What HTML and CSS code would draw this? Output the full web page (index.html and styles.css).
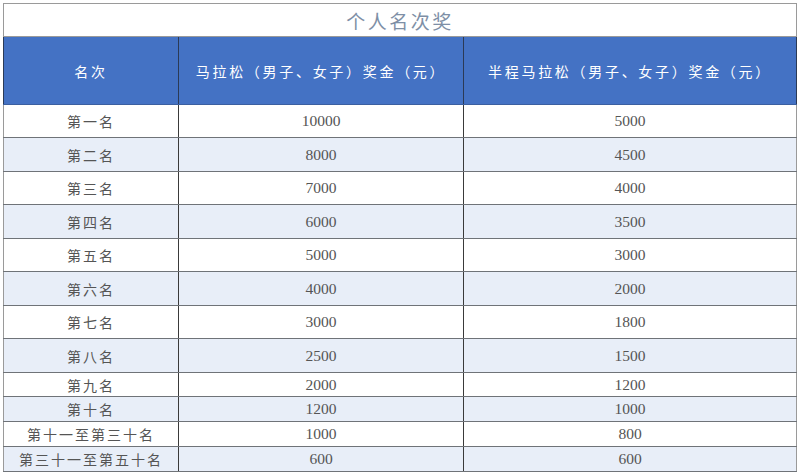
FILE: index.html
```html
<!DOCTYPE html>
<html lang="zh-CN">
<head>
<meta charset="utf-8">
<link rel="stylesheet" href="styles.css">
</head>
<body>
<div class="wrap">
<table class="prize">
  <colgroup>
    <col class="c1"><col class="c2"><col class="c3">
  </colgroup>
  <tr class="title-row"><th colspan="3" class="title">个人名次奖</th></tr>
  <tr class="head-row">
    <th class="head">名次</th>
    <th class="head">马拉松（男子、女子）奖金（元）</th>
    <th class="head">半程马拉松（男子、女子）奖金（元）</th>
  </tr>
  <tr class="r h33"><td class="name">第一名</td><td class="num">10000</td><td class="num">5000</td></tr>
  <tr class="r alt h34"><td class="name">第二名</td><td class="num">8000</td><td class="num">4500</td></tr>
  <tr class="r h33"><td class="name">第三名</td><td class="num">7000</td><td class="num">4000</td></tr>
  <tr class="r alt h34"><td class="name">第四名</td><td class="num">6000</td><td class="num">3500</td></tr>
  <tr class="r h33"><td class="name">第五名</td><td class="num">5000</td><td class="num">3000</td></tr>
  <tr class="r alt h34"><td class="name">第六名</td><td class="num">4000</td><td class="num">2000</td></tr>
  <tr class="r h33"><td class="name">第七名</td><td class="num">3000</td><td class="num">1800</td></tr>
  <tr class="r alt h34"><td class="name">第八名</td><td class="num">2500</td><td class="num">1500</td></tr>
  <tr class="r h24"><td class="name">第九名</td><td class="num">2000</td><td class="num">1200</td></tr>
  <tr class="r alt h25"><td class="name">第十名</td><td class="num">1200</td><td class="num">1000</td></tr>
  <tr class="r h25"><td class="name">第十一至第三十名</td><td class="num">1000</td><td class="num">800</td></tr>
  <tr class="r alt h25"><td class="name">第三十一至第五十名</td><td class="num">600</td><td class="num">600</td></tr>
</table>
</div>
</body>
</html>
```

FILE: styles.css
```css
html, body {
  margin: 0;
  padding: 0;
  background: #ffffff;
}
.wrap {
  padding: 3px 4px 0 3px;
}
.prize {
  width: 793px;
  border-collapse: collapse;
  table-layout: fixed;
  border: 1px solid #9a9a9a;
}
.c1 { width: 175px; }
.c2 { width: 285px; }
.c3 { width: 333px; }
.title-row { height: 33px; }
.title {
  padding: 0 0 0 0;
  font-family: "Noto Sans CJK SC", sans-serif;
  font-weight: 400;
  font-size: 19px;
  letter-spacing: 2.5px;
  color: #7e8fa6;
  text-align: center;
  vertical-align: middle;
  border: 1px solid #9a9a9a;
  background: #ffffff;
}
.head-row { height: 68px; }
.head {
  background: #4472c4;
  color: #ffffff;
  font-family: "Noto Sans CJK SC", sans-serif;
  font-weight: 400;
  font-size: 14px;
  letter-spacing: 2.7px;
  text-align: center;
  vertical-align: middle;
  padding: 0;
  border-left: 1px solid #2b3a55;
  border-right: 1px solid #2b3a55;
  border-bottom: 1px solid #3b5fa0;
}
.r td {
  padding: 0;
  text-align: center;
  vertical-align: middle;
  color: #555555;
  border-top: 1px solid #6f7378;
  border-bottom: 1px solid #6f7378;
  border-left: 1px solid #3a3a3a;
  border-right: 1px solid #3a3a3a;
  line-height: 1;
}
.r td:first-child { border-left-color: #9a9a9a; }
.r td:last-child { border-right-color: #9a9a9a; }
.alt td { background: #e8eef8; }
.h33 { height: 33px; }
.h34 { height: 34px; }
.h24 { height: 24px; }
.h25 { height: 25px; }
.name {
  font-family: "Noto Sans CJK SC", sans-serif;
  font-size: 14px;
  letter-spacing: 2px;
}
.num {
  font-family: "Liberation Serif", "Times New Roman", serif;
  font-size: 15.5px;
}
```
